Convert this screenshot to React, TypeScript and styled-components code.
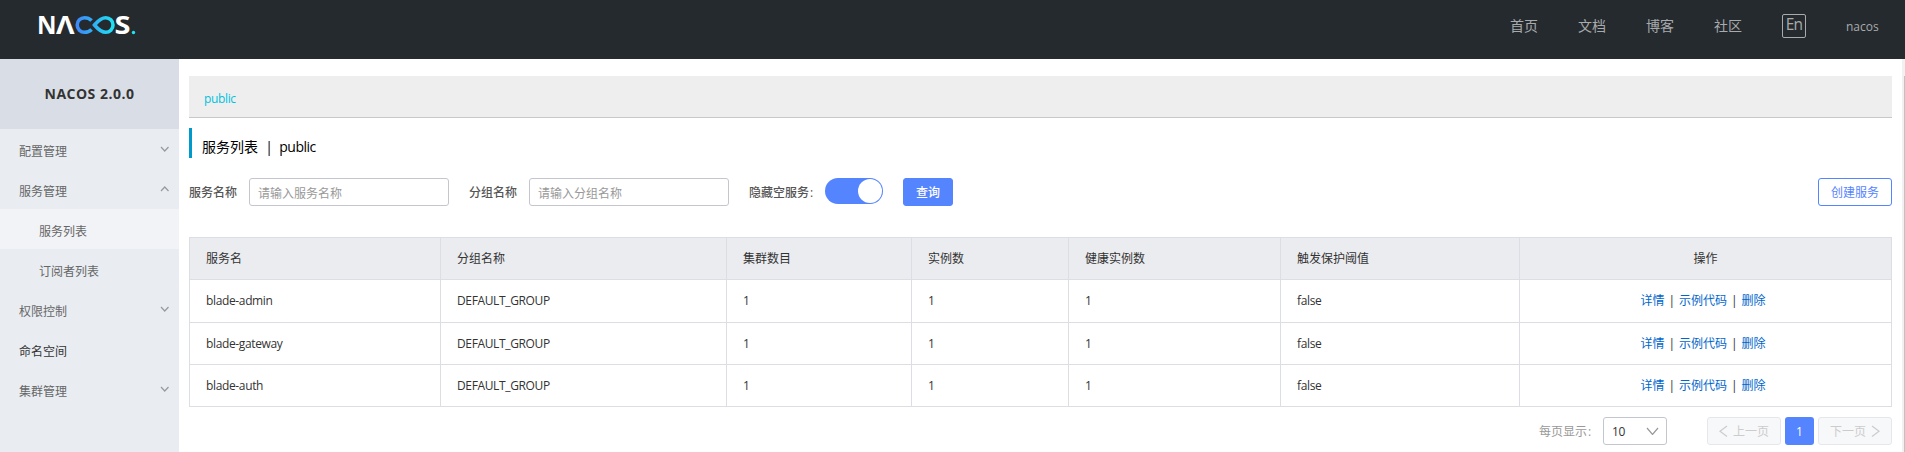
import React from "react";
import styled, { createGlobalStyle } from "styled-components";

const Global = createGlobalStyle`
  * { box-sizing: border-box; }
  body {
    margin: 0;
    background: #fff;
    color: #333;
    font: 12px/18px "Open Sans", "Noto Sans CJK SC", sans-serif;
  }
  button, input { font: inherit; }
`;

const Page = styled.div`
  display: flex;
  flex-direction: column;
  width: 1905px;
  height: 452px;
  overflow: hidden;
`;

const Header = styled.header`
  display: flex;
  justify-content: space-between;
  flex: none;
  height: 59px;
  padding: 0 27px 0 38px;
  background: #252a2f;
`;

const HeaderNav = styled.nav`
  display: flex;
  align-items: flex-start;
  gap: 40px;
  padding-top: 14px;
  color: #a8aaac;
`;

const NavLink = styled.a`
  font-size: 14px;
  line-height: 24px;
`;

const LangSwitch = styled.span`
  width: 24px;
  height: 24px;
  border: 1px solid #a8aaac;
  border-radius: 2px;
  font-size: 15.5px;
  line-height: 19px;
  letter-spacing: -0.8px;
  text-align: center;
`;

const UserName = styled.span`
  width: 32px;
  font-size: 12px;
  font-weight: 500;
  line-height: 25px;
  white-space: nowrap;
`;

const Body = styled.div`
  display: flex;
  flex: 1;
  min-height: 0;
`;

const Sidebar = styled.aside`
  flex: none;
  width: 179px;
  background: #e9edf2;
`;

const SidebarTitle = styled.div`
  height: 70px;
  background: #d9dde5;
  color: #333;
  font-size: 14px;
  font-weight: 700;
  letter-spacing: 0.5px;
  line-height: 70px;
  text-align: center;
  white-space: nowrap;
`;

const MenuItem = styled.div<{ $sub?: boolean; $active?: boolean; $dark?: boolean }>`
  display: flex;
  align-items: center;
  justify-content: space-between;
  height: 40px;
  padding: 0 10px 0 ${(p) => (p.$sub ? 39 : 19)}px;
  background: ${(p) => (p.$active ? "#f2f3f7" : "transparent")};
  color: ${(p) => (p.$dark ? "#333" : "#666")};
`;

const MenuText = styled.span`
  padding-top: 5px;
`;

const Main = styled.main`
  flex: 1;
  padding: 17px 10px 0;
`;

const ScrollTrack = styled.div`
  flex: none;
  width: 3px;
  padding: 17px 0 0 2px;
  background: #f1f1f1;
`;

const ScrollThumb = styled.div`
  height: 100%;
  background: #c1c1c1;
`;

const Namespaces = styled.div`
  height: 42px;
  padding-left: 15px;
  border-bottom: 1px solid #c8c8c8;
  background: #eee;
  color: #00c1de;
  letter-spacing: -0.35px;
  line-height: 46px;
`;

const PageTitle = styled.h1`
  height: 30px;
  margin: 10px 0 20px;
  padding-left: 10px;
  border-left: 3px solid #09c;
  color: #000;
  font-size: 14px;
  font-weight: 400;
  line-height: 38px;
  white-space: pre;
`;

const TitleNamespace = styled.span`
  margin-left: -1px;
  letter-spacing: -0.5px;
`;

const FilterBar = styled.form`
  display: flex;
  align-items: flex-start;
  height: 28px;
  margin-bottom: 31px;
`;

const Label = styled.label<{ $width: number }>`
  width: ${(p) => p.$width}px;
  color: #555;
  font-weight: 500;
  line-height: 30px;
  white-space: nowrap;
`;

const TextInput = styled.input`
  width: 200px;
  height: 28px;
  margin-right: 20px;
  padding: 2px 8px 0;
  border: 1px solid #c4c6cf;
  border-radius: 3px;
  background: #fff;
  outline: none;
  &::placeholder { color: #999; opacity: 1; }
`;

const Switch = styled.div`
  display: flex;
  justify-content: flex-end;
  width: 58px;
  height: 26px;
  margin-right: 20px;
  padding: 1px;
  border-radius: 13px;
  background: #5584ff;
`;

const SwitchKnob = styled.div`
  width: 24px;
  height: 24px;
  border-radius: 50%;
  background: #fff;
`;

const Button = styled.button<{ $width: number; $outlined?: boolean }>`
  width: ${(p) => p.$width}px;
  height: 28px;
  margin-left: ${(p) => (p.$outlined ? "auto" : "0")};
  padding: 2px 0 0;
  border: 1px solid #5584ff;
  border-radius: 3px;
  background: ${(p) => (p.$outlined ? "#fff" : "#5584ff")};
  color: ${(p) => (p.$outlined ? "#5584ff" : "#fff")};
  font-weight: ${(p) => (p.$outlined ? 400 : 500)};
`;

const Table = styled.div`
  border: 1px solid #dcdee3;
  border-width: 1px 0 0 1px;
`;

const Row = styled.div<{ $height: number; $head?: boolean }>`
  display: grid;
  grid-template-columns: 251px 286px 185px 157px 212px 239px 372px;
  height: ${(p) => p.$height}px;
  background: ${(p) => (p.$head ? "#ebecf0" : "#fff")};
  letter-spacing: ${(p) => (p.$head ? "0" : "-0.36px")};
  line-height: ${(p) => (p.$head ? 42 : 41)}px;
`;

const Cell = styled.div<{ $center?: boolean }>`
  display: flex;
  align-items: flex-start;
  justify-content: ${(p) => (p.$center ? "center" : "flex-start")};
  padding: 0 16px;
  border: 1px solid #dcdee3;
  border-width: 0 1px 1px 0;
  white-space: nowrap;
  overflow: hidden;
`;

const Actions = styled.div`
  display: flex;
  margin-right: 5px;
  letter-spacing: 0;
`;

const Action = styled.a`
  color: #06c;
`;

const Divider = styled.span`
  width: 14.5px;
  text-align: center;
`;

const Pager = styled.div`
  display: flex;
  justify-content: flex-end;
  height: 28px;
  margin-top: 10px;
`;

const PagerLabel = styled.span`
  width: 64px;
  color: #999;
  line-height: 30px;
`;

const Colon = styled.span`
  margin-left: 1px;
`;

const PageSize = styled.div`
  display: flex;
  align-items: center;
  justify-content: space-between;
  width: 64px;
  margin-right: 40px;
  padding: 0 7px 0 8px;
  border: 1px solid #c4c6cf;
  border-radius: 3px;
  letter-spacing: -0.3px;
  span { padding-top: 2px; }
`;

const PageStep = styled.div`
  display: flex;
  align-items: center;
  justify-content: center;
  gap: 5px;
  width: 74px;
  border: 1px solid #e6e7eb;
  border-radius: 3px;
  background: #f7f8fa;
  color: #ccc;
  span { padding-top: 2px; }
`;

const CurrentPage = styled.div`
  width: 29px;
  margin: 0 4px;
  border-radius: 3px;
  background: #5584ff;
  color: #fff;
  line-height: 30px;
  text-align: center;
`;

type Dir = "up" | "down" | "left" | "right";
const chevrons: Record<Dir, string> = {
  up: "0,1 .5,0 1,1",
  down: "0,0 .5,1 1,0",
  left: "1,0 0,.5 1,1",
  right: "0,0 1,.5 0,1",
};

const Chevron = ({ dir, w, h, color }: { dir: Dir; w: number; h: number; color: string }) => {
  const points = chevrons[dir]
    .split(" ")
    .map((p) => p.split(",").map(Number))
    .map(([x, y]) => `${x * w + 1},${y * h + 1}`)
    .join(" ");
  return (
    <svg width={w + 2} height={h + 2}>
      <polyline points={points} fill="none" stroke={color} strokeWidth="1.2" />
    </svg>
  );
};

const Logo = () => (
  <svg width="110" height="50" viewBox="0 -14 110 50">
    <defs>
      <linearGradient id="loop" x1="38" x2="77" y1="0" y2="0" gradientUnits="userSpaceOnUse">
        <stop offset="0" stopColor="#3f86f8" />
        <stop offset="1" stopColor="#1de4f2" />
      </linearGradient>
    </defs>
    <g fill="#fff" fontFamily="Open Sans" fontWeight="700" fontSize="25">
      <text x="-1" y="20" textLength="19.500" lengthAdjust="spacingAndGlyphs">N</text>
      <text x="18" y="20" textLength="18.500" lengthAdjust="spacingAndGlyphs">Λ</text>
      <text x="76.500" y="20" textLength="16" lengthAdjust="spacingAndGlyphs">S</text>
    </g>
    <g fill="none" stroke="url(#loop)" strokeWidth="3.600">
      <path d="M53.600 6.600C51.600 4.600 49.200 3.700 46.500 3.700A7.300 7.300 0 0 0 46.500 18.300C49.200 18.300 51.600 17.400 53.600 15.400" />
      <path d="M56.500 11C59.500 7.600 62.300 3.700 67.700 3.700A7.300 7.300 0 0 1 67.700 18.300C62.300 18.300 59.500 14.400 56.500 11Z" />
    </g>
    <circle cx="95.500" cy="18.500" r="1.700" fill="#1de4f2" />
  </svg>
);

const menu: { text: string; dir?: Dir; sub?: boolean; active?: boolean; dark?: boolean }[] = [
  { text: "配置管理", dir: "down" },
  { text: "服务管理", dir: "up" },
  { text: "服务列表", sub: true, active: true },
  { text: "订阅者列表", sub: true },
  { text: "权限控制", dir: "down" },
  { text: "命名空间", dark: true },
  { text: "集群管理", dir: "down" },
];

const columns = ["服务名", "分组名称", "集群数目", "实例数", "健康实例数", "触发保护阈值"];

const services = ["blade-admin", "blade-gateway", "blade-auth"].map((name) => ({
  name,
  values: [name, "DEFAULT_GROUP", "1", "1", "1", "false"],
}));

export default function App() {
  return (
    <Page>
      <Global />
      <Header>
        <Logo />
        <HeaderNav>
          {["首页", "文档", "博客", "社区"].map((t) => (
            <NavLink key={t}>{t}</NavLink>
          ))}
          <LangSwitch>En</LangSwitch>
          <UserName>nacos</UserName>
        </HeaderNav>
      </Header>
      <Body>
        <Sidebar>
          <SidebarTitle>NACOS 2.0.0</SidebarTitle>
          {menu.map((m) => (
            <MenuItem key={m.text} $sub={m.sub} $active={m.active} $dark={m.dark}>
              <MenuText>{m.text}</MenuText>
              {m.dir && <Chevron dir={m.dir} w={7.5} h={4} color="#999" />}
            </MenuItem>
          ))}
        </Sidebar>
        <Main>
          <Namespaces>public</Namespaces>
          <PageTitle>
            {"服务列表  |  "}
            <TitleNamespace>public</TitleNamespace>
          </PageTitle>
          <FilterBar>
            <Label $width={60}>服务名称</Label>
            <TextInput placeholder="请输入服务名称" />
            <Label $width={60}>分组名称</Label>
            <TextInput placeholder="请输入分组名称" />
            <Label $width={76}>
              隐藏空服务<Colon>:</Colon>
            </Label>
            <Switch>
              <SwitchKnob />
            </Switch>
            <Button type="button" $width={50}>查询</Button>
            <Button type="button" $width={74} $outlined>创建服务</Button>
          </FilterBar>
          <Table>
            <Row $height={42} $head>
              {columns.map((c) => (
                <Cell key={c}>{c}</Cell>
              ))}
              <Cell $center>操作</Cell>
            </Row>
            {services.map((s, i) => (
              <Row key={s.name} $height={i === 0 ? 43 : 42}>
                {s.values.map((v, j) => (
                  <Cell key={j}>{v}</Cell>
                ))}
                <Cell $center>
                  <Actions>
                    <Action>详情</Action>
                    <Divider>|</Divider>
                    <Action>示例代码</Action>
                    <Divider>|</Divider>
                    <Action>删除</Action>
                  </Actions>
                </Cell>
              </Row>
            ))}
          </Table>
          <Pager>
            <PagerLabel>
              每页显示<Colon>:</Colon>
            </PagerLabel>
            <PageSize>
              <span>10</span>
              <Chevron dir="down" w={11} h={6.5} color="#999" />
            </PageSize>
            <PageStep>
              <Chevron dir="left" w={7} h={10.5} color="#ccc" />
              <span>上一页</span>
            </PageStep>
            <CurrentPage>1</CurrentPage>
            <PageStep>
              <span>下一页</span>
              <Chevron dir="right" w={7} h={10.5} color="#ccc" />
            </PageStep>
          </Pager>
        </Main>
        <ScrollTrack>
          <ScrollThumb />
        </ScrollTrack>
      </Body>
    </Page>
  );
}
